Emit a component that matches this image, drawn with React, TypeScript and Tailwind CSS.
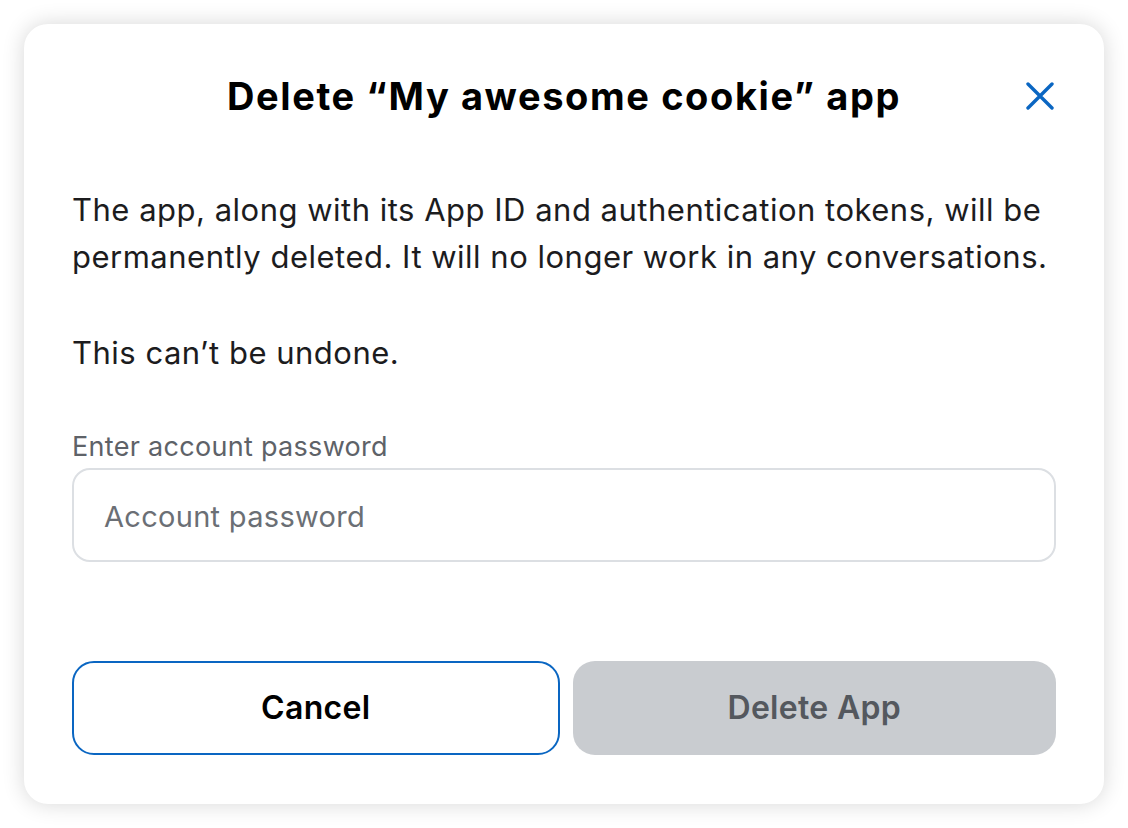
export default function App() {
  return (
    <div className="min-h-screen w-full bg-white p-6 font-['Inter','Noto_Sans',sans-serif]">
      {/* Dialog card */}
      <div className="flex h-[780px] w-[1080px] flex-col rounded-[24px] bg-white px-12 pt-[52px] pb-[49px] shadow-[0_0_22px_rgba(0,0,0,0.16)]">
        {/* Header */}
        <div className="relative flex items-center justify-center">
          <h1 className="text-[38px] leading-[40px] font-bold tracking-[1.6px] text-black">
            Delete “My awesome cookie” app
          </h1>
          <button
            className="absolute right-[1px] top-1/2 flex h-[30px] w-[30px] -translate-y-1/2 items-center justify-center text-[#0a66c2]"
            aria-label="Close"
          >
            <svg width="28" height="28" viewBox="0 0 28 28" fill="none" stroke="currentColor" strokeWidth="3.4" strokeLinecap="round">
              <path d="M2 2L26 26M26 2L2 26" />
            </svg>
          </button>
        </div>

        {/* Body */}
        <p className="mt-[70px] text-[31px] leading-[47px] tracking-[0.5px] text-[#1c1c1e]">
          The app, along with its App ID and authentication tokens, will be permanently deleted. It will no longer
          work in any conversations.
        </p>
        <p className="mt-[49px] text-[31px] leading-[47px] tracking-[0.5px] text-[#1c1c1e]">This can’t be undone.</p>

        {/* Password field */}
        <label className="mt-[55px] text-[27px] leading-[32px] tracking-[0.3px] text-[#5e6268]">Enter account password</label>
        <div className="mt-[5px] flex h-[94px] items-center rounded-[18px] border-2 border-[#dcdfe3] px-[30px] pt-[4px]">
          <span className="text-[29px] tracking-[0.3px] text-[#6b6f75]">Account password</span>
        </div>

        {/* Actions */}
        <div className="mt-auto flex gap-[13px]">
          <button className="flex h-[94px] flex-1 items-center justify-center rounded-[22px] border-2 border-[#0a66c2] text-[32px] font-semibold tracking-[0.3px] text-black">
            Cancel
          </button>
          <button className="flex h-[94px] flex-1 items-center justify-center rounded-[22px] bg-[#c9ccd0] text-[32px] font-semibold tracking-[0.3px] text-[#54585e]">
            Delete App
          </button>
        </div>
      </div>
    </div>
  );
}
